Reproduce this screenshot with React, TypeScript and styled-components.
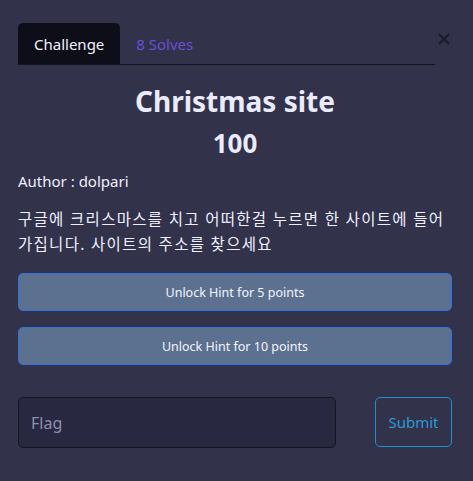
import React from "react";
import styled, { createGlobalStyle } from "styled-components";

const Global = createGlobalStyle`
  html, body { margin: 0; padding: 0; background: #32324a; }
  body { font-family: "Noto Sans", "Noto Sans CJK KR", sans-serif; color: #eef0ff; }
  * { box-sizing: border-box; }
`;

const Page = styled.div`
  width: 473px;
  height: 481px;
  background: #32324a;
  padding: 23px 21px 0 18px;
  display: flex;
  flex-direction: column;
`;

const Header = styled.div`
  display: flex;
  align-items: flex-start;
`;

const Tabs = styled.nav`
  width: 417px;
  display: flex;
  align-items: stretch;
  border-bottom: 1px solid #15151f;
`;

const Tab = styled.div<{ $active?: boolean }>`
  height: 41px;
  padding: 0 16px;
  display: flex;
  align-items: center;
  font-size: 15px;
  border-radius: 5px 5px 0 0;
  background: ${(p) => (p.$active ? "#0d0e17" : "transparent")};
  color: ${(p) => (p.$active ? "#f2f2ff" : "#6a4fd6")};
`;

const Close = styled.div`
  margin-left: 2px;
  margin-top: 9px;
  width: 13px;
  height: 13px;
  display: flex;
  align-items: center;
  justify-content: center;
`;

const Title = styled.h1`
  margin: 14px 0 0;
  text-align: center;
  font-size: 28px;
  font-weight: 700;
  line-height: 44px;
  color: #ebebff;
`;

const Points = styled.h2`
  margin: 0;
  text-align: center;
  font-size: 26px;
  font-weight: 700;
  line-height: 40px;
  color: #ebebff;
`;

const Author = styled.p`
  margin: 6px 0 0;
  font-size: 15px;
  line-height: 24px;
`;

const Desc = styled.p`
  margin: 14px 0 0;
  font-size: 15.5px;
  line-height: 25px;
  letter-spacing: 1.3px;
`;

const Hints = styled.div`
  margin-top: 16px;
  display: flex;
  flex-direction: column;
  gap: 16px;
`;

const HintButton = styled.button`
  height: 38px;
  width: 434px;
  background: #5c718f;
  border: 1px solid #2b74e6;
  border-radius: 5px;
  color: #f4f4ff;
  font-family: inherit;
  font-size: 12.5px;
`;

const FlagRow = styled.div`
  margin-top: 32px;
  display: flex;
  gap: 39px;
  align-items: flex-start;
`;

const FlagInput = styled.input`
  width: 318px;
  height: 51px;
  background: #282840;
  border: 1px solid #15151f;
  border-radius: 5px;
  padding: 0 12px;
  font-family: inherit;
  font-size: 16px;
  color: #eef0ff;
  &::placeholder { color: #8d8fb0; }
  outline: none;
`;

const Submit = styled.button`
  width: 77px;
  height: 50px;
  background: transparent;
  border: 1px solid #1f8fcf;
  border-radius: 5px;
  color: #2a9ad8;
  font-family: inherit;
  font-size: 15px;
`;

export default function App() {
  return (
    <>
      <Global />
      <Page>
        <Header>
          <Tabs>
            <Tab $active>Challenge</Tab>
            <Tab>8 Solves</Tab>
          </Tabs>
          <Close>
            <svg width="12" height="12" viewBox="0 0 12 12">
              <path d="M1 1 L11 11 M11 1 L1 11" stroke="#1b1b29" strokeWidth="2.2" />
            </svg>
          </Close>
        </Header>
        <Title>Christmas site</Title>
        <Points>100</Points>
        <Author>Author : dolpari</Author>
        <Desc>
          구글에 크리스마스를 치고 어떠한걸 누르면 한 사이트에 들어가집니다. 사이트의 주소를 찾으세요
        </Desc>
        <Hints>
          <HintButton>Unlock Hint for 5 points</HintButton>
          <HintButton>Unlock Hint for 10 points</HintButton>
        </Hints>
        <FlagRow>
          <FlagInput placeholder="Flag" />
          <Submit>Submit</Submit>
        </FlagRow>
      </Page>
    </>
  );
}
